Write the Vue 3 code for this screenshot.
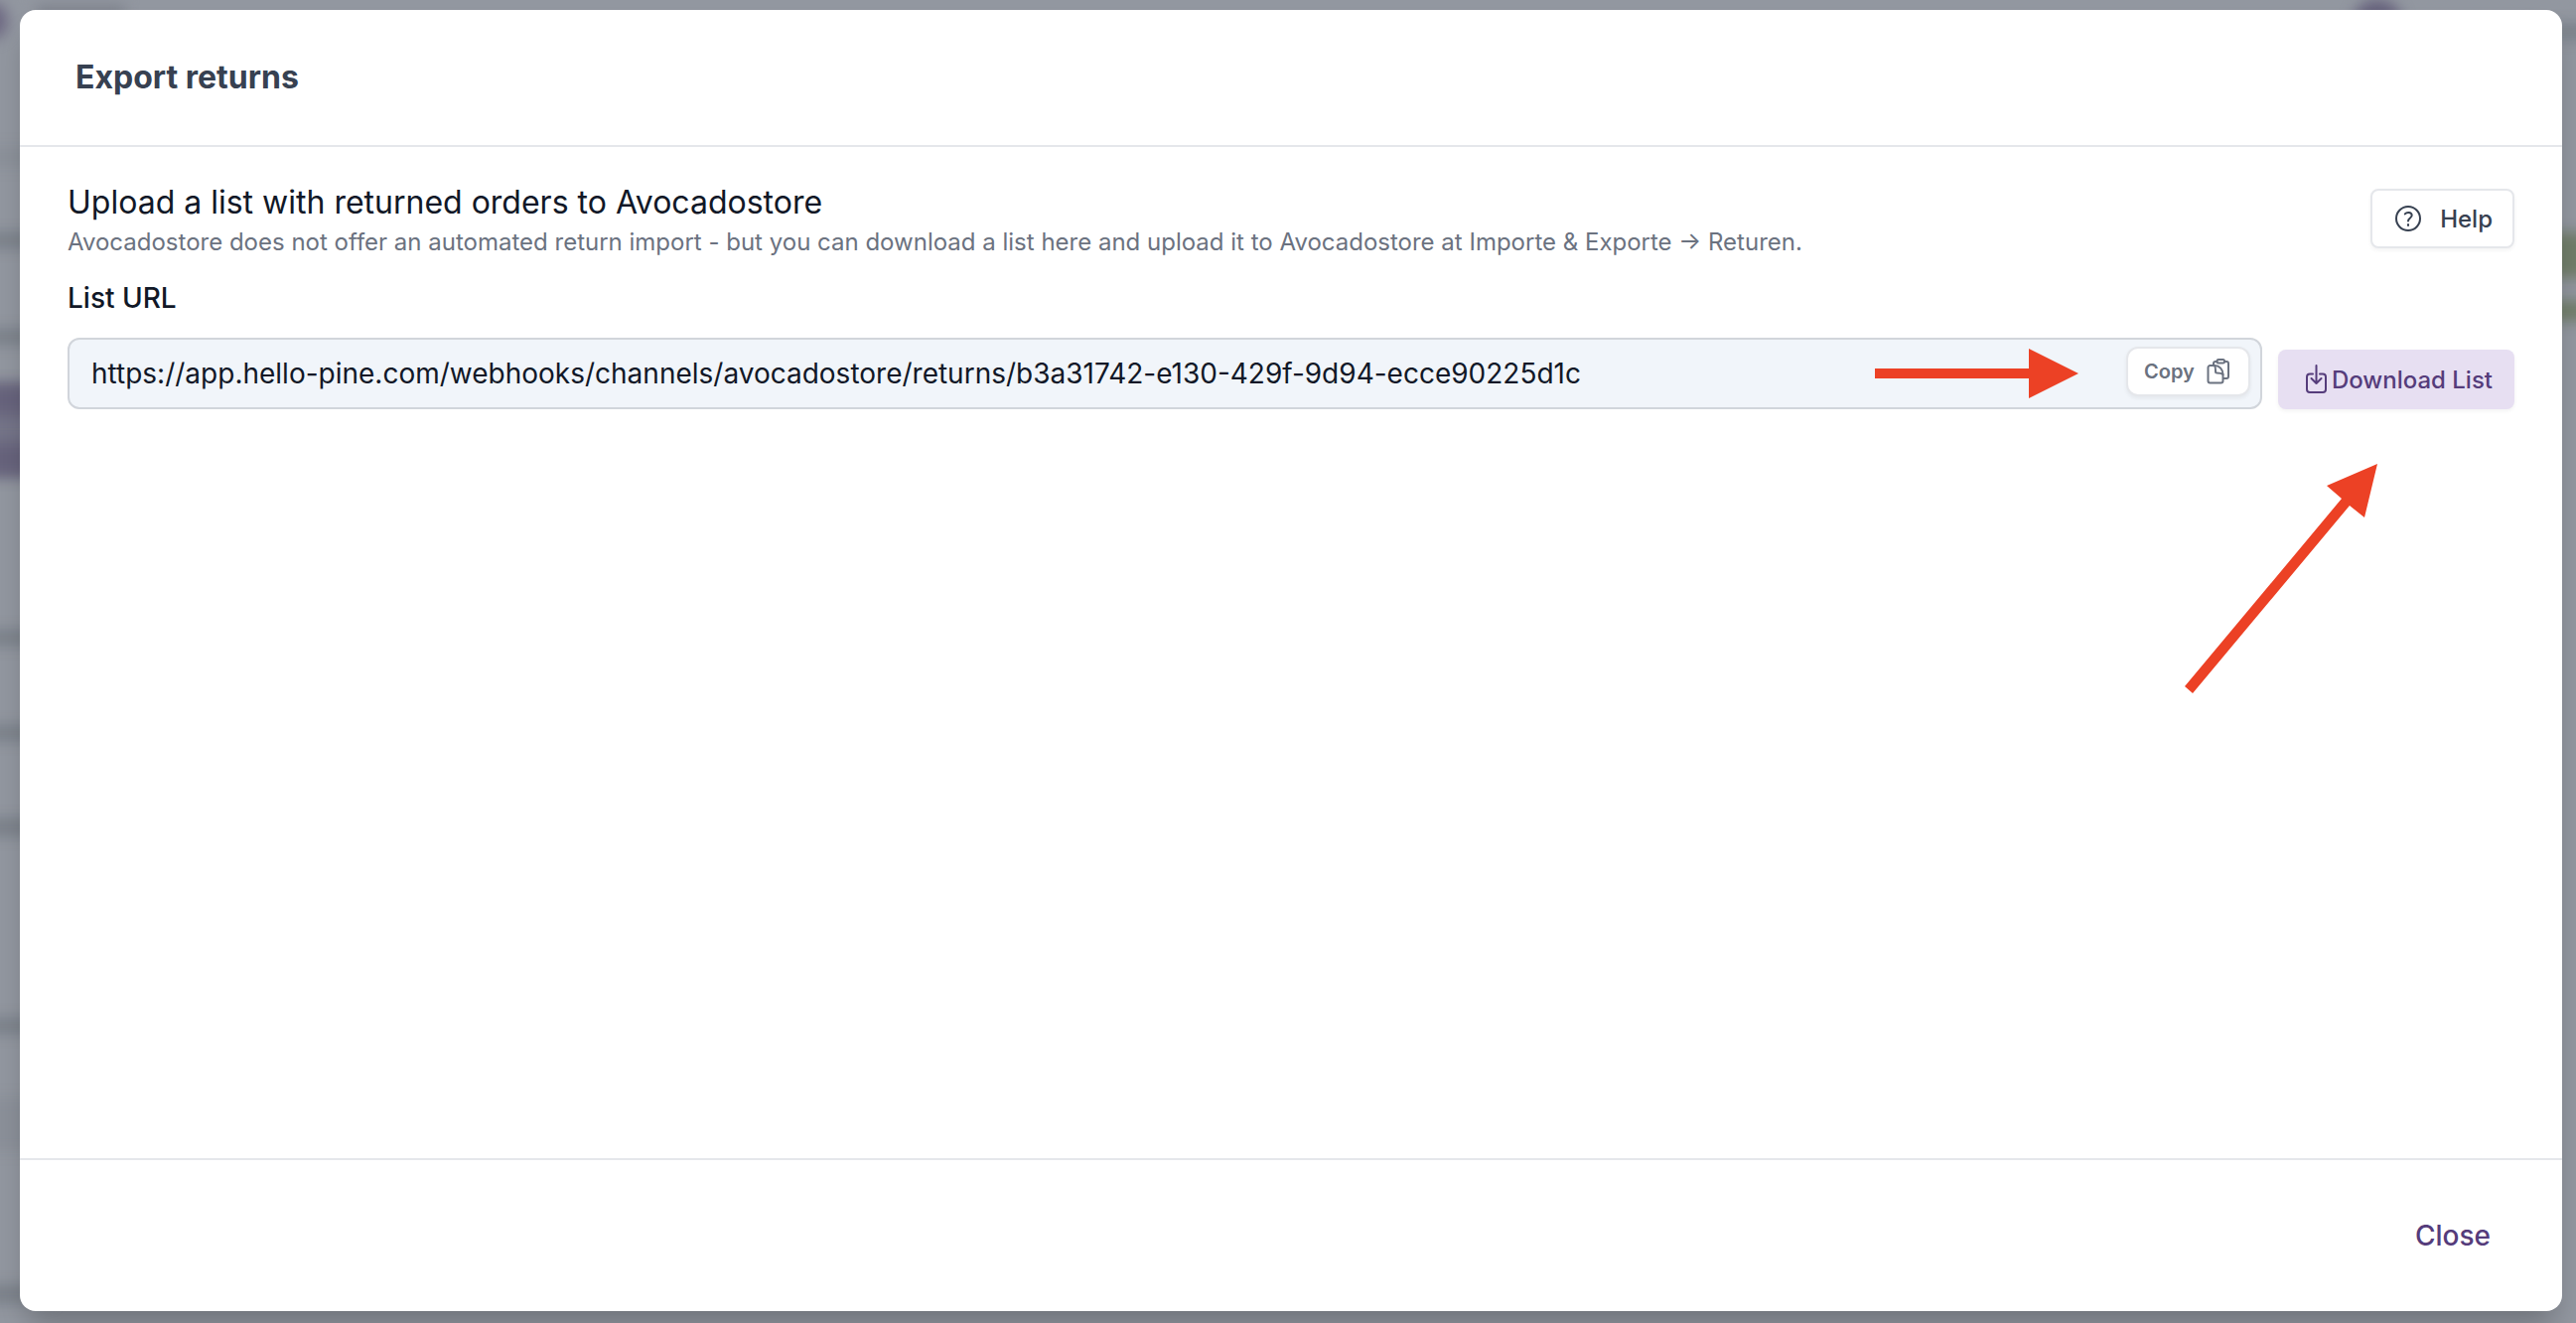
<template>
  <div class="page">
    <!-- Blurred app behind the modal -->
    <div class="backdrop" aria-hidden="true">
      <span
        v-for="(shape, i) in shapes"
        :key="i"
        class="shape"
        :class="[shape.side, shape.color]"
        :style="{ top: shape.top + 'px', height: shape.height + 'px' }"
      ></span>
      <span class="logo"></span>
      <span class="crumb"></span>
      <span class="avatar"></span>
    </div>

    <div class="modal" role="dialog" aria-labelledby="modal-title">
      <header class="modal-header">
        <h1 id="modal-title">Export returns</h1>
      </header>

      <main class="modal-body">
        <div class="intro">
          <div>
            <h2>Upload a list with returned orders to Avocadostore</h2>
            <p>
              Avocadostore does not offer an automated return import - but you
              can download a list here and upload it to Avocadostore at Importe
              &amp; Exporte → Returen.
            </p>
          </div>
          <button type="button" class="btn help">
            <svg width="28" height="28" viewBox="0 0 28 28" fill="none">
              <circle cx="14" cy="14" r="12" />
              <path d="M10.8 9.4c1.7-2 6.4-2 6.9 1 .5 3.1-3.7 2.9-3.7 6.1" />
              <path d="M14 20v1" />
            </svg>
            Help
          </button>
        </div>

        <label for="list-url">List URL</label>
        <div class="url-row">
          <div class="url-box">
            <input id="list-url" type="text" readonly :value="listUrl" />
            <svg class="arrow-right" width="206" height="50" viewBox="0 0 206 50">
              <path d="M0 20H155V0L205 25L155 50V30H0Z" />
            </svg>
            <button type="button" class="copy" @click="copyUrl">
              Copy
              <svg width="24" height="26" viewBox="0 0 24 26" fill="none">
                <path d="M7 7V5a2 2 0 0 1 2-2h1.5M18 3h2a2 2 0 0 1 2 2v13a2 2 0 0 1-2 2h-3" />
                <rect x="10.5" y="1" width="7.5" height="3.6" rx="1.5" />
                <path d="M1.5 9a2 2 0 0 1 2-2H8c5 0 8.5 4 8.5 9v6.5a2 2 0 0 1-2 2h-11a2 2 0 0 1-2-2Z" />
                <path d="M8 7c1.300 1.500 1 4 1 6 0 1 .5 1.500 1.500 1.500 2 0 4.500 0 6 1.500" />
              </svg>
            </button>
          </div>
          <button type="button" class="btn download">
            <svg width="22" height="30" viewBox="0 0 22 30" fill="none">
              <path d="M7 9.500H4a3 3 0 0 0-3 3V25a3 3 0 0 0 3 3h13a3 3 0 0 0 3-3V12.500a3 3 0 0 0-3-3h-3" />
              <path d="M10.500 1v18M5.500 14l5 5 5-5" />
            </svg>
            Download List
          </button>
        </div>
        <svg class="arrow-up" width="196" height="234" viewBox="0 0 196 234">
          <path d="M194 0L181 54L166 42L8 231L0 224L158 35L143 22Z" />
        </svg>
      </main>

      <footer class="modal-footer">
        <button type="button" class="close">Close</button>
      </footer>
    </div>
  </div>
</template>

<script setup>
import { ref } from "vue";

const listUrl = ref(
  "https://app.hello-pine.com/webhooks/channels/avocadostore/returns/b3a31742-e130-429f-9d94-ecce90225d1c"
);

const shapes = [
  { side: "left", color: "faint", top: 148, height: 20 },
  { side: "left", color: "grey", top: 234, height: 16 },
  { side: "left", color: "grey", top: 331, height: 16 },
  { side: "left", color: "plum-light", top: 386, height: 94 },
  { side: "left", color: "plum", top: 388, height: 30 },
  { side: "left", color: "plum", top: 446, height: 32 },
  { side: "left", color: "grey", top: 634, height: 16 },
  { side: "left", color: "grey", top: 730, height: 16 },
  { side: "left", color: "grey", top: 824, height: 18 },
  { side: "left", color: "grey", top: 1025, height: 16 },
  { side: "left", color: "faint", top: 1105, height: 54 },
  { side: "left", color: "grey", top: 1294, height: 18 },
  { side: "right", color: "grey", top: 24, height: 16 },
  { side: "right", color: "green", top: 234, height: 46 },
  { side: "right", color: "green", top: 303, height: 20 },
];

const copyUrl = () => {
  navigator.clipboard.writeText(listUrl.value);
};
</script>

<style>
body {
  margin: 0;
}
</style>

<style scoped>
.page {
  position: relative;
  display: flex;
  box-sizing: border-box;
  min-height: 100vh;
  padding: 10px 14px 12px 20px;
  background: #9297a0;
  color: #111827;
  font-family: Inter, "Liberation Sans", sans-serif;
}

.backdrop {
  position: absolute;
  inset: 0;
  overflow: hidden;
}

.backdrop span {
  position: absolute;
  filter: blur(7px);
}

.shape {
  width: 80px;
}

.left {
  left: -30px;
}

.right {
  right: -30px;
}

.grey {
  background: #7a8089;
}

.faint {
  background: #8b9099;
}

.plum {
  background: #67637c;
}

.plum-light {
  background: #757589;
}

.green {
  background: #707d69;
}

.logo {
  top: 2px;
  left: -30px;
  width: 38px;
  height: 38px;
  border-radius: 50%;
  background: #6d6882;
}

.crumb {
  top: 5px;
  left: 36px;
  width: 90px;
  height: 20px;
  background: #7f838d;
}

.avatar {
  top: -1px;
  right: 175px;
  width: 50px;
  height: 50px;
  border-radius: 50%;
  background: #66627c;
}

.modal {
  position: relative;
  display: flex;
  flex: 1;
  flex-direction: column;
  overflow-wrap: anywhere;
  border-radius: 16px;
  background: #fff;
  box-shadow: 0 20px 30px -8px rgba(0, 0, 0, 0.25);
}

.modal-header {
  padding: 48px 56px;
  border-bottom: 2px solid #e5e7eb;
}

h1,
h2,
p {
  margin: 0;
}

h1 {
  color: #374151;
  font-size: 32px;
  font-weight: 700;
  line-height: 40px;
}

.modal-body {
  flex: 1;
  padding: 36px 48px;
}

.intro {
  display: flex;
  justify-content: space-between;
  align-items: flex-start;
}

h2 {
  font-size: 32px;
  font-weight: 400;
  line-height: 40px;
}

p {
  color: #6b7280;
  font-size: 24px;
  line-height: 40px;
}

button {
  border: none;
  background: none;
  color: inherit;
  font-family: inherit;
  cursor: pointer;
}

.btn {
  display: flex;
  align-items: center;
  flex-shrink: 0;
  box-sizing: border-box;
  height: 60px;
  border-radius: 8px;
  font-size: 24px;
  font-weight: 500;
  box-shadow: 0 2px 4px rgba(0, 0, 0, 0.05);
}

svg {
  flex-shrink: 0;
  stroke: currentColor;
  stroke-width: 2;
  stroke-linecap: round;
  stroke-linejoin: round;
}

.help {
  gap: 18px;
  margin-top: 6px;
  padding: 0 20px 0 22px;
  border: 2px solid #e5e7eb;
  background: #fff;
  color: #374151;
}

label {
  display: block;
  margin-top: 16px;
  font-size: 28px;
  font-weight: 500;
  line-height: 40px;
}

.url-row {
  display: flex;
  align-items: flex-end;
  gap: 16px;
  margin-top: 20px;
}

.url-box {
  position: relative;
  flex: 1;
}

input {
  display: block;
  box-sizing: border-box;
  width: 100%;
  height: 72px;
  padding: 0 160px 0 22px;
  border: 2px solid #d1d5db;
  border-radius: 12px;
  outline: none;
  background: #f1f5fa;
  color: #111827;
  font-family: inherit;
  font-size: 28px;
}

.copy {
  position: absolute;
  top: 9px;
  right: 12px;
  display: flex;
  align-items: center;
  gap: 12px;
  box-sizing: border-box;
  height: 50px;
  padding: 0 18px 0 16px;
  border: 2px solid #e5e7eb;
  border-radius: 12px;
  background: #fff;
  color: #6b7280;
  font-size: 20px;
  font-weight: 600;
  box-shadow: 0 2px 4px rgba(0, 0, 0, 0.06);
}

.download {
  gap: 4px;
  padding: 0 22px 0 28px;
  background: #e7dff2;
  color: #553c7b;
}

.arrow-right,
.arrow-up {
  position: absolute;
  fill: #ec4125;
  stroke: none;
  pointer-events: none;
}

.arrow-right {
  top: 11px;
  right: 184px;
}

.arrow-up {
  top: 457px;
  right: 184px;
}

.modal-footer {
  display: flex;
  justify-content: flex-end;
  padding: 48px 56px;
  border-top: 2px solid #e5e7eb;
}

.close {
  height: 56px;
  padding: 0 16px;
  color: #553c7b;
  font-size: 28px;
  font-weight: 500;
}
</style>
